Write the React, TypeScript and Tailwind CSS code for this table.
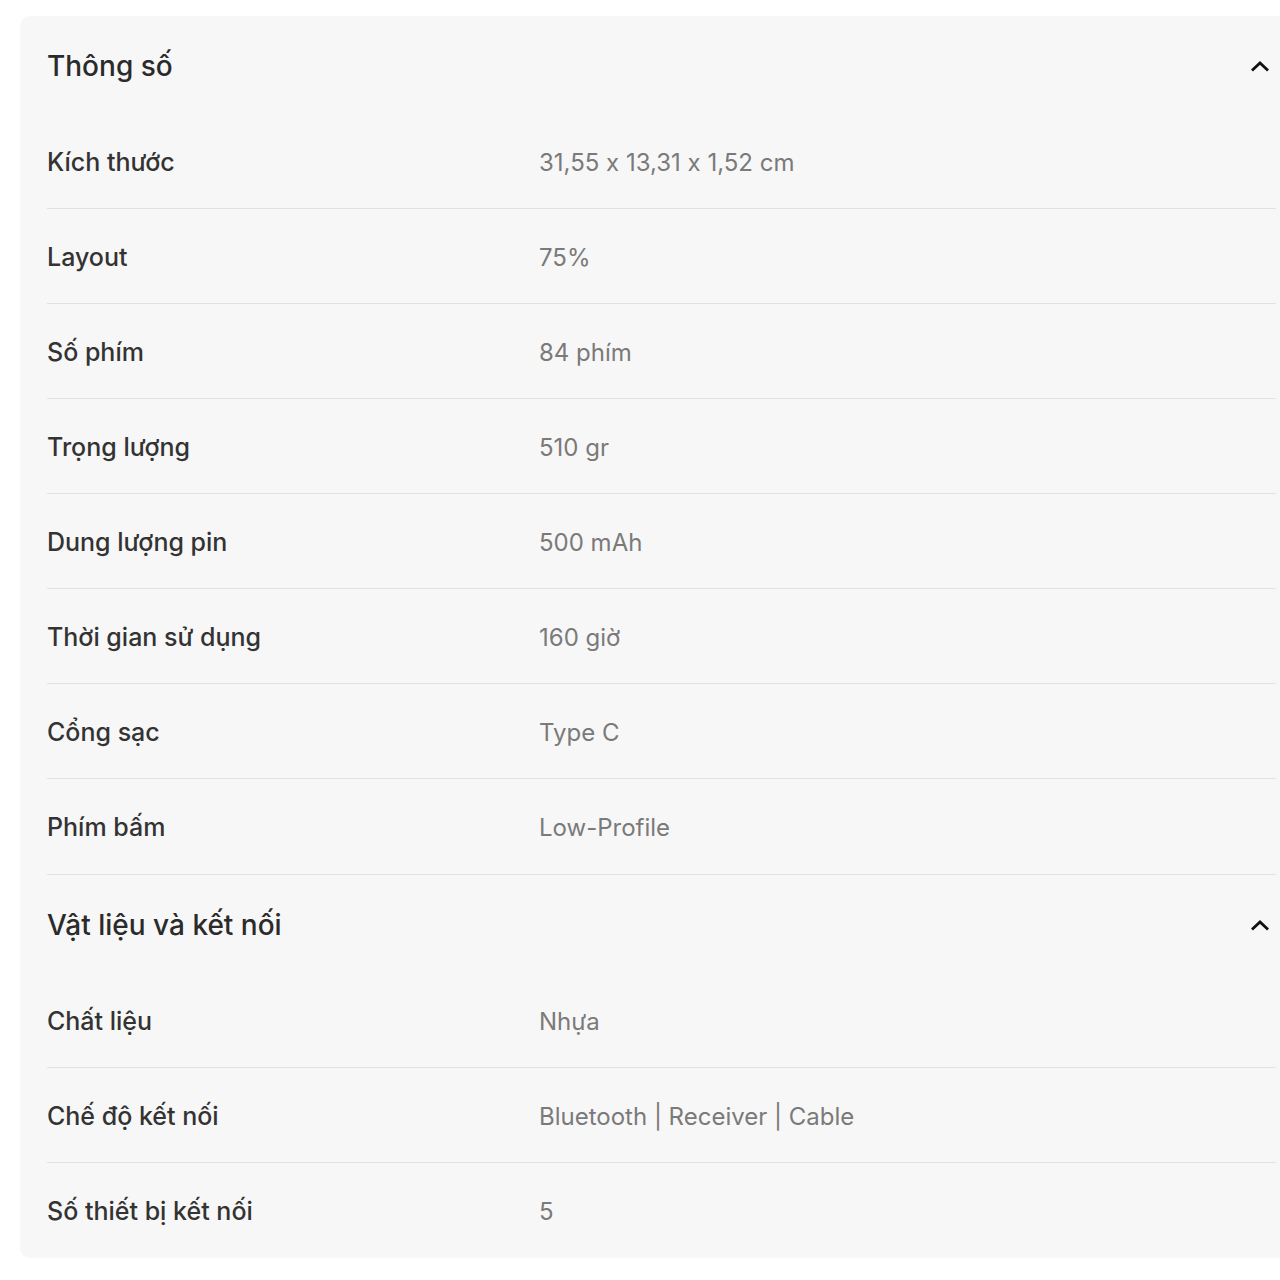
import React from "react";

type Row = { label: string; value: string };

const sections: { title: string; rows: Row[] }[] = [
  {
    title: "Thông số",
    rows: [
      { label: "Kích thước", value: "31,55 x 13,31 x 1,52 cm" },
      { label: "Layout", value: "75%" },
      { label: "Số phím", value: "84 phím" },
      { label: "Trọng lượng", value: "510 gr" },
      { label: "Dung lượng pin", value: "500 mAh" },
      { label: "Thời gian sử dụng", value: "160 giờ" },
      { label: "Cổng sạc", value: "Type C" },
      { label: "Phím bấm", value: "Low-Profile" },
    ],
  },
  {
    title: "Vật liệu và kết nối",
    rows: [
      { label: "Chất liệu", value: "Nhựa" },
      { label: "Chế độ kết nối", value: "Bluetooth | Receiver | Cable" },
      { label: "Số thiết bị kết nối", value: "5" },
    ],
  },
];

function Chevron() {
  return (
    <svg width="24" height="24" viewBox="0 0 24 24" fill="none">
      <path d="M5 15.5L12 9l7 6.5" stroke="#111" strokeWidth="2.8" strokeLinecap="square" />
    </svg>
  );
}

export default function App() {
  return (
    <div
      className="w-[1280px] h-[1280px] overflow-hidden bg-white [font-feature-settings:'calt'_0]"
      style={{ fontFamily: "Inter, 'Noto Sans', sans-serif" }}
    >
      <div className="ml-[20px] mt-[16px] w-[1283px] rounded-[10px] bg-[#f7f7f7] px-[27px]">
        {sections.map((s, si) => (
          <div key={si} className={si < sections.length - 1 ? "border-b border-[#e2e2e2]" : ""}>
            <div className="flex h-[98px] items-center justify-between pt-[2px]">
              <div className="text-[28px] font-medium text-[#2b2b2b]">{s.title}</div>
              <div className="mr-[4px]">
                <Chevron />
              </div>
            </div>
            {s.rows.map((r, ri) => (
              <div
                key={ri}
                className={
                  "grid grid-cols-[492px_1fr] h-[95px] items-center pt-[3px] " +
                  (ri < s.rows.length - 1 ? "border-b border-[#e2e2e2]" : "")
                }
              >
                <div className="text-[25px] font-medium text-[#333333]">{r.label}</div>
                <div className="text-[24px] text-[#7a7a7a]">{r.value}</div>
              </div>
            ))}
          </div>
        ))}
      </div>
    </div>
  );
}
